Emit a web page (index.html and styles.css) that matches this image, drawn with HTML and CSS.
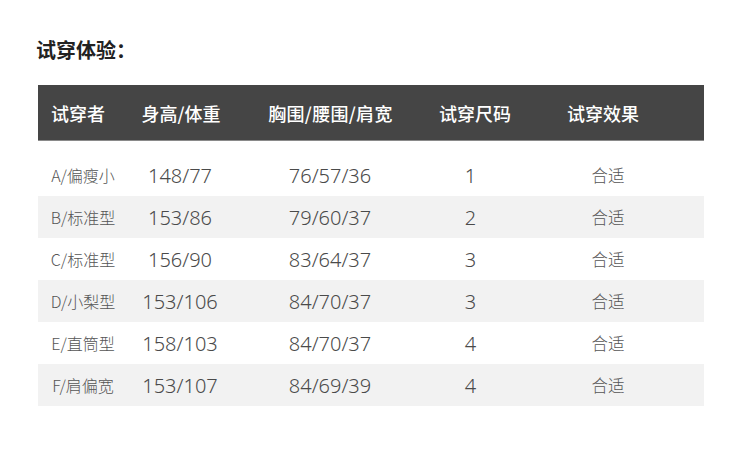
FILE: index.html
```html
<!DOCTYPE html>
<html lang="zh">
<head>
<meta charset="utf-8">
<link rel="stylesheet" href="styles.css">
</head>
<body>
<div class="page">
  <h2 class="title">试穿体验：</h2>
  <div class="table">
    <div class="row head">
      <div class="c1">试穿者</div>
      <div class="c2">身高/体重</div>
      <div class="c3">胸围/腰围/肩宽</div>
      <div class="c4">试穿尺码</div>
      <div class="c5">试穿效果</div>
    </div>
    <div class="body">
      <div class="row"><div class="c1">A/偏瘦小</div><div class="c2 num">148/77</div><div class="c3 num">76/57/36</div><div class="c4 num">1</div><div class="c5">合适</div></div>
      <div class="row alt"><div class="c1">B/标准型</div><div class="c2 num">153/86</div><div class="c3 num">79/60/37</div><div class="c4 num">2</div><div class="c5">合适</div></div>
      <div class="row"><div class="c1">C/标准型</div><div class="c2 num">156/90</div><div class="c3 num">83/64/37</div><div class="c4 num">3</div><div class="c5">合适</div></div>
      <div class="row alt"><div class="c1">D/小梨型</div><div class="c2 num">153/106</div><div class="c3 num">84/70/37</div><div class="c4 num">3</div><div class="c5">合适</div></div>
      <div class="row"><div class="c1">E/直筒型</div><div class="c2 num">158/103</div><div class="c3 num">84/70/37</div><div class="c4 num">4</div><div class="c5">合适</div></div>
      <div class="row alt"><div class="c1">F/肩偏宽</div><div class="c2 num">153/107</div><div class="c3 num">84/69/39</div><div class="c4 num">4</div><div class="c5">合适</div></div>
    </div>
  </div>
</div>
</body>
</html>
```
FILE: styles.css
```css
html, body {
  margin: 0;
  padding: 0;
  background: #fff;
}
body {
  font-family: "Noto Sans CJK SC", "Noto Sans", sans-serif;
  width: 750px;
  height: 453px;
  overflow: hidden;
}
.page {
  padding: 36px 46px 0 38px;
}
.title {
  margin: 0 0 0 -2px;
  font-size: 20px;
  line-height: 28px;
  font-weight: 700;
  color: #222;
}
.table {
  margin-top: 21px;
  width: 666px;
}
.row {
  display: grid;
  grid-template-columns: 84px 116px 184px 100px 168px;
  align-items: center;
  text-align: center;
}
.head {
  height: 55px;
  background: #454545;
  border-bottom: 1px solid #8a8a8a;
  color: #fff;
  font-size: 18px;
  font-weight: 500;
}
.head .c1 { padding-right: 4px; }
.head .c2 { padding-left: 2px; }
.head .c3 { padding-left: 1px; letter-spacing: 0.3px; }
.head .c4 { padding-left: 6px; }
.head .c5 { padding-right: 6px; }
.body {
  margin-top: 13px;
}
.body .row {
  height: 42px;
  color: #555;
  font-size: 16px;
  font-weight: 300;
}
.body .c1 { padding-left: 6px; }
.body .num {
  font-family: "Noto Sans", sans-serif;
  font-size: 20px;
  font-weight: 300;
  color: #4a4a4a;
}
.body .c4 { padding-right: 3px; }
.body .c5 { padding-left: 4px; font-size: 16.5px; }
.alt {
  background: #f2f2f2;
}
```
